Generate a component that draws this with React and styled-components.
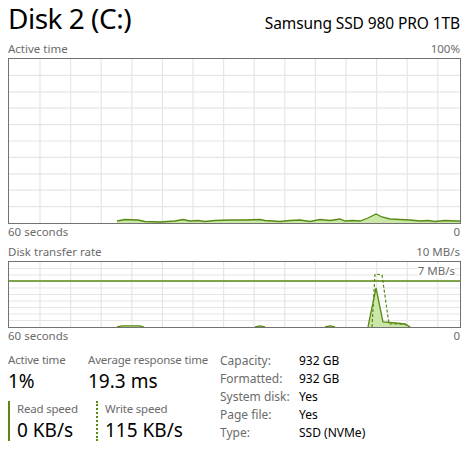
import styled, { createGlobalStyle } from "styled-components";

const GREEN = "#568a12";
const FILL = "#cbe7a8";

const GlobalStyle = createGlobalStyle`
  html, body {
    margin: 0;
    padding: 0;
    background: #ffffff;
  }
  body {
    font-family: "Noto Sans", "Open Sans", sans-serif;
    color: #000000;
  }
`;

const activePoints = [
  [117, 219], [125, 217.5], [138, 218], [145, 219.5], [160, 220], [175, 219],
  [183, 217.5], [190, 219], [198, 218.5], [205, 219.5], [215, 218.5], [230, 218],
  [245, 218], [260, 217.5], [265, 218.5], [280, 219.5], [290, 218.5], [300, 218],
  [310, 219.5], [320, 217.5], [330, 218.5], [340, 217], [345, 219], [352, 218.5],
  [360, 219], [368, 216], [376, 212], [382, 215], [390, 217], [400, 217.5],
  [410, 218], [420, 219], [428, 218.5], [435, 219.5], [445, 218.5], [455, 219],
  [460, 219],
];

const readPoints = [
  [[117, 325], [122, 323.8], [140, 323.8], [144, 325]],
  [[255, 325], [260, 323.8], [265, 325]],
  [[325, 325], [330, 323.8], [335, 325]],
  [[368, 325], [376, 286], [383, 320], [395, 321], [405, 322], [410, 325]],
];

const writePoints = [
  [372, 325], [375, 272], [382, 273], [389, 322], [400, 322], [408, 323], [410, 325],
];

const infoRows = [
  { label: "Capacity:", value: "932 GB" },
  { label: "Formatted:", value: "932 GB" },
  { label: "System disk:", value: "Yes" },
  { label: "Page file:", value: "Yes" },
  { label: "Type:", value: "SSD (NVMe)" },
];

function toPath(points, ox, oy) {
  return points.map(([x, y]) => `${x - ox},${y - oy}`).join(" ");
}

function Grid({ width, height, rows }) {
  const vertical = [];
  for (let x = 31; x < width; x += 30.6) vertical.push(x);
  const horizontal = [];
  for (let i = 1; i < rows; i++) horizontal.push((height / rows) * i);
  return (
    <g stroke="#e6e6e6" strokeWidth="1.2">
      {vertical.map((x) => (
        <line key={"v" + x} x1={x} y1="0" x2={x} y2={height} />
      ))}
      {horizontal.map((y) => (
        <line key={"h" + y} x1="0" y1={y} x2={width} y2={y} />
      ))}
    </g>
  );
}

function ActiveChart() {
  const w = 451;
  const h = 164;
  const ox = 9;
  const oy = 57;
  const line = toPath(activePoints, ox, oy);
  const area = `${activePoints[0][0] - ox},${h} ${line} ${w},${h}`;
  return (
    <ChartFrame $height={h}>
      <svg width={w} height={h} viewBox={`0 0 ${w} ${h}`}>
        <Grid width={w} height={h} rows={10} />
        <polygon points={area} fill={FILL} />
        <polyline points={line} fill="none" stroke={GREEN} strokeWidth="1.3" />
      </svg>
    </ChartFrame>
  );
}

function TransferChart() {
  const w = 451;
  const h = 65;
  const ox = 9;
  const oy = 260;
  return (
    <ChartFrame $height={h}>
      <svg width={w} height={h} viewBox={`0 0 ${w} ${h}`}>
        <Grid width={w} height={h} rows={10} />
        <line x1="0" y1="19" x2={w} y2="19" stroke={GREEN} strokeWidth="1.6" />
        {readPoints.map((pts, i) => (
          <g key={i}>
            <polygon points={toPath(pts, ox, oy)} fill={FILL} />
            <polyline points={toPath(pts, ox, oy)} fill="none" stroke={GREEN} strokeWidth="1.3" />
          </g>
        ))}
        <polyline
          points={toPath(writePoints, ox, oy)}
          fill="none"
          stroke={GREEN}
          strokeWidth="1.2"
          strokeDasharray="3 2"
        />
      </svg>
      <ScaleMark>7 MB/s</ScaleMark>
    </ChartFrame>
  );
}

export default function App() {
  return (
    <>
      <GlobalStyle />
      <Page>
        <Header>
          <Title>Disk 2 (C:)</Title>
          <Model>Samsung SSD 980 PRO 1TB</Model>
        </Header>
        <AxisRow $top={4}>
          <span>Active time</span>
          <span>100%</span>
        </AxisRow>
        <ActiveChart />
        <AxisRow $top={1}>
          <span>60 seconds</span>
          <span>0</span>
        </AxisRow>
        <AxisRow $top={4}>
          <span>Disk transfer rate</span>
          <span>10 MB/s</span>
        </AxisRow>
        <TransferChart />
        <AxisRow $top={1}>
          <span>60 seconds</span>
          <span>0</span>
        </AxisRow>
        <Bottom>
          <Stats>
            <Stat>
              <StatLabel>Active time</StatLabel>
              <StatValue>1%</StatValue>
            </Stat>
            <Stat>
              <StatLabel>Average response time</StatLabel>
              <StatValue>19.3 ms</StatValue>
            </Stat>
            <Speed $dashed={false}>
              <StatLabel>Read speed</StatLabel>
              <StatValue>0 KB/s</StatValue>
            </Speed>
            <Speed $dashed={true}>
              <StatLabel>Write speed</StatLabel>
              <StatValue>115 KB/s</StatValue>
            </Speed>
          </Stats>
          <Info>
            {infoRows.map((row) => (
              <InfoRow key={row.label}>
                <InfoLabel>{row.label}</InfoLabel>
                <InfoValue>{row.value}</InfoValue>
              </InfoRow>
            ))}
          </Info>
        </Bottom>
      </Page>
    </>
  );
}

const Page = styled.div`
  width: 453px;
  padding: 0 0 0 8px;
  display: flex;
  flex-direction: column;
`;

const Header = styled.div`
  display: flex;
  justify-content: space-between;
  align-items: baseline;
  height: 38px;
  padding-right: 1px;
`;

const Title = styled.div`
  font-size: 28px;
  line-height: 36px;
  letter-spacing: -0.5px;
`;

const Model = styled.div`
  font-size: 15.5px;
  letter-spacing: -0.1px;
`;

const AxisRow = styled.div`
  display: flex;
  justify-content: space-between;
  font-size: 11.5px;
  line-height: 14px;
  color: #6b6b6b;
  margin-top: ${(p) => p.$top}px;
  margin-bottom: 2px;
  padding-right: 1px;
`;

const ChartFrame = styled.div`
  position: relative;
  border: 1px solid #727272;
  height: ${(p) => p.$height}px;
  svg {
    display: block;
  }
`;

const ScaleMark = styled.div`
  position: absolute;
  top: 2px;
  right: 5px;
  font-size: 11.5px;
  color: #6b6b6b;
  background: #ffffff;
  line-height: 14px;
`;

const Bottom = styled.div`
  display: flex;
  margin-top: 7px;
`;

const Stats = styled.div`
  display: grid;
  grid-template-columns: 80px 132px;
  row-gap: 6px;
`;

const Stat = styled.div`
  display: flex;
  flex-direction: column;
`;

const Speed = styled.div`
  display: flex;
  flex-direction: column;
  padding-left: 7px;
  border-left: 2px ${(p) => (p.$dashed ? "dotted" : "solid")} ${GREEN};
  margin-left: ${(p) => (p.$dashed ? "8px" : "0")};
  height: 40px;
`;

const StatLabel = styled.div`
  font-size: 11.5px;
  letter-spacing: -0.2px;
  line-height: 16px;
  color: #6b6b6b;
  white-space: nowrap;
`;

const StatValue = styled.div`
  font-size: 19px;
  line-height: 26px;
  white-space: nowrap;
`;

const Info = styled.div`
  display: flex;
  flex-direction: column;
`;

const InfoRow = styled.div`
  display: flex;
  font-size: 12px;
  line-height: 18px;
`;

const InfoLabel = styled.div`
  width: 79px;
  color: #6b6b6b;
`;

const InfoValue = styled.div`
  color: #000000;
`;
